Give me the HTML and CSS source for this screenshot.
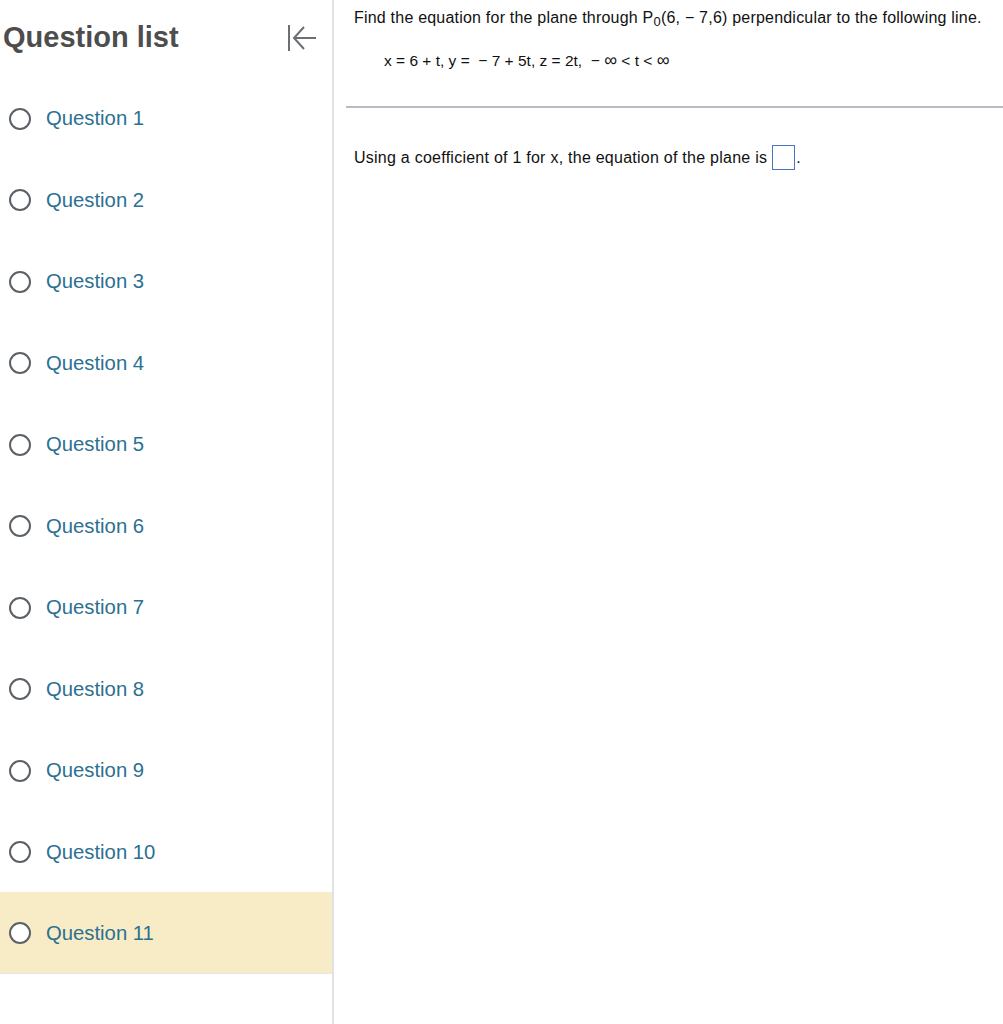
FILE: index.html
```html
<!DOCTYPE html>
<html>
<head>
<meta charset="utf-8">
<link rel="stylesheet" href="styles.css">
</head>
<body>
<div class="page">
  <aside class="sidebar">
    <div class="sidebar-head">
      <h1 class="title">Question list</h1>
      <svg class="collapse" width="30" height="28" viewBox="0 0 30 28">
        <path d="M2 1 V27" stroke="#6b6f73" stroke-width="2" fill="none"/>
        <path d="M29 14 H7 M17 3 L7 14 L17 25" stroke="#6b6f73" stroke-width="2" fill="none"/>
      </svg>
    </div>
    <ul class="qlist">
      <li class="qitem"><span class="radio"></span><span class="qlabel">Question 1</span></li>
      <li class="qitem"><span class="radio"></span><span class="qlabel">Question 2</span></li>
      <li class="qitem"><span class="radio"></span><span class="qlabel">Question 3</span></li>
      <li class="qitem"><span class="radio"></span><span class="qlabel">Question 4</span></li>
      <li class="qitem"><span class="radio"></span><span class="qlabel">Question 5</span></li>
      <li class="qitem"><span class="radio"></span><span class="qlabel">Question 6</span></li>
      <li class="qitem"><span class="radio"></span><span class="qlabel">Question 7</span></li>
      <li class="qitem"><span class="radio"></span><span class="qlabel">Question 8</span></li>
      <li class="qitem"><span class="radio"></span><span class="qlabel">Question 9</span></li>
      <li class="qitem"><span class="radio"></span><span class="qlabel">Question 10</span></li>
      <li class="qitem active"><span class="radio"></span><span class="qlabel">Question 11</span></li>
    </ul>
  </aside>
  <main class="content">
    <div class="question">
      <p class="prompt">Find the equation for the plane through P<sub>0</sub>(6, − 7,6) perpendicular to the following line.</p>
      <p class="formula">x = 6 + t, y = &nbsp;− 7 + 5t, z = 2t, &nbsp;− <span class="inf">∞</span> &lt; t &lt; <span class="inf">∞</span></p>
    </div>
    <hr class="divider">
    <p class="answer">Using a coefficient of 1 for x, the equation of the plane is <span class="answer-box"></span>.</p>
  </main>
</div>
</body>
</html>
```
FILE: styles.css
```css
* { box-sizing: border-box; }
html, body { margin: 0; padding: 0; background: #fff; }
body { font-family: "Liberation Sans", Arial, sans-serif; }
.page { display: flex; height: 1024px; }
.sidebar {
  width: 334px;
  flex: 0 0 334px;
  border-right: 2px solid #dfe3e8;
}
.sidebar-head {
  height: 77px;
  display: flex;
  align-items: center;
  justify-content: space-between;
  padding: 0 15px 2px 3px;
}
.title {
  margin: 0;
  font-size: 29px;
  font-weight: 700;
  color: #4d4d4d;
}
.collapse { display: block; margin-top: 1px; }
.qlist { list-style: none; margin: 0; padding: 0; }
.qitem {
  height: 81.5px;
  display: flex;
  align-items: center;
  padding-left: 9px;
  padding-top: 2px;
}
.qitem.active {
  background: #f8ecc6;
  border-bottom: 1px solid #e6e6e6;
}
.radio {
  width: 22px;
  height: 22px;
  border: 2px solid #5b6167;
  border-radius: 50%;
  background: #fff;
  margin-right: 15px;
}
.qlabel {
  font-size: 20.3px;
  color: #2c7092;
}
.content { flex: 1; padding-top: 7px; }
.question { padding-left: 20px; }
.prompt {
  margin: 0;
  font-size: 16px;
  letter-spacing: 0.21px;
  color: #111;
  line-height: 22px;
}
.prompt sub { font-size: 13px; vertical-align: -3px; }
.formula {
  margin: 18px 0 0 30px;
  font-size: 15.5px;
  color: #111;
  line-height: 20px;
}
.inf { font-size: 18px; line-height: 1; }
.divider {
  margin: 35px 0 0 12px;
  border: 0;
  border-top: 2px solid #b9bcc5;
}
.answer {
  margin: 37px 0 0 20px;
  font-size: 16px;
  letter-spacing: 0.25px;
  color: #111;
  display: flex;
  align-items: center;
}
.answer-box {
  display: inline-block;
  width: 23px;
  height: 25px;
  border: 1px solid #4a72c9;
  margin-left: 5px;
  margin-right: 1px;
}
```
